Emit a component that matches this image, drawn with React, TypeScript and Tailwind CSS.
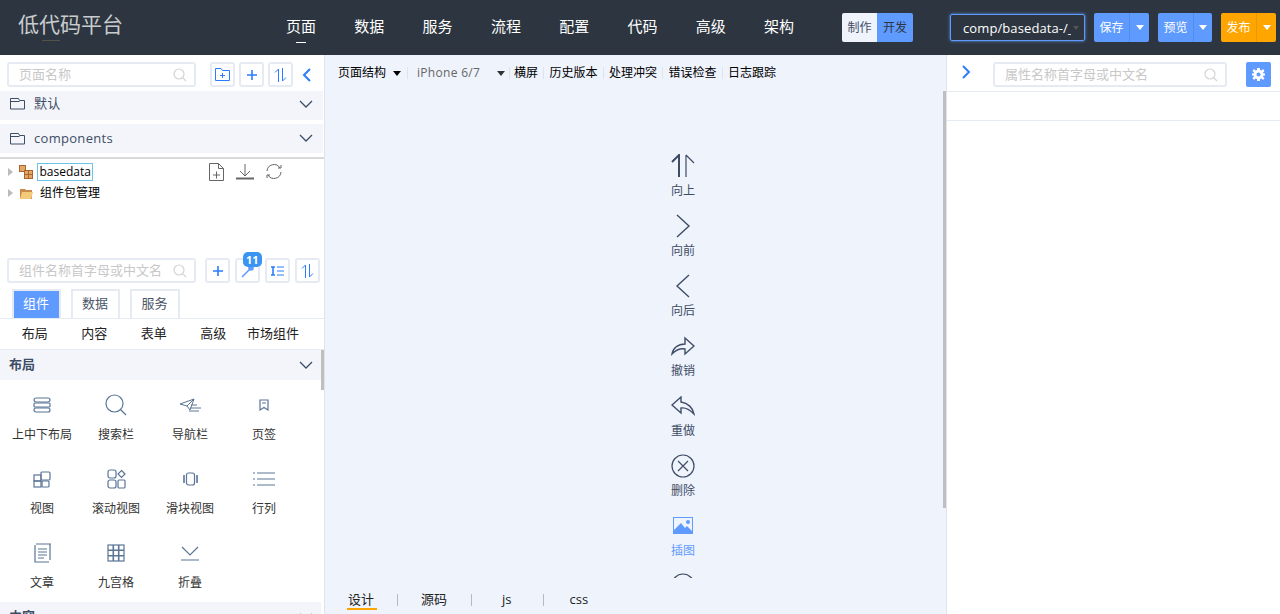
import type { ReactNode } from "react";

const font = "font-['Open_Sans','Noto_Sans_CJK_SC',sans-serif]";

const navItems = ["页面", "数据", "服务", "流程", "配置", "代码", "高级", "架构"];

const SearchIcon = () => (
  <svg width="14" height="14" viewBox="0 0 14 14" fill="none" stroke="#d4d4d4" strokeWidth="1.2">
    <circle cx="6" cy="6" r="5" />
    <path d="M9.6 9.6 13 13" />
  </svg>
);

const Chevron = ({ color = "#3e4d66" }: { color?: string }) => (
  <svg width="14" height="9" viewBox="0 0 14 9" fill="none" stroke={color} strokeWidth="1.3">
    <path d="M1 1l6 6 6-6" />
  </svg>
);

const FolderIcon = () => (
  <svg width="15" height="12" viewBox="0 0 15 12" fill="none" stroke="#3e4d66" strokeWidth="1">
    <path d="M.5 11V.5h8l1 2h5V11zM.5 3.500h9" />
  </svg>
);

const Plus = () => (
  <svg width="10" height="10" viewBox="0 0 10 10" stroke="#2b7cff" strokeWidth="1.6">
    <path d="M0 5h10M5 0v10" />
  </svg>
);

const SortIcon = () => (
  <svg width="13" height="14" viewBox="0 0 13 14" fill="none" stroke="#2b7cff" strokeWidth="1">
    <path d="M4.500 14V1L1 4.500M8.500 0v13L12 9.500" />
  </svg>
);

const SmallSearch = ({ className = "" }: { className?: string }) => (
  <span className={className}>
    <SearchIcon />
  </span>
);

const IconBtn = ({ children }: { children: ReactNode }) => (
  <button className="flex h-[25px] w-[25px] items-center justify-center rounded-[3px] border-2 border-[#e6ebf3] bg-white">
    {children}
  </button>
);

const SplitBtn = ({ label, orange, narrow }: { label: string; orange?: boolean; narrow?: boolean }) => (
  <div
    className={`flex h-[29px] items-center rounded-[2px] text-[12px] text-white ${narrow ? "w-[54px]" : "w-[55px]"} ${
      orange ? "bg-[#ffa500]" : "bg-[#5f9bff]"
    }`}
  >
    <span className="flex w-[35px] justify-center">{label}</span>
    <span
      className={`flex h-full flex-1 items-center justify-center border-l ${
        orange ? "border-[#e8980a]" : "border-[#4f8cf0]"
      }`}
    >
      <span className="h-0 w-0 border-x-[4px] border-t-[5px] border-x-transparent border-t-white" />
    </span>
  </div>
);

const s = { fill: "none", stroke: "#5b7596", strokeWidth: 1.2 };

const widgets: { name: string; icon: ReactNode }[] = [
  {
    name: "上中下布局",
    icon: (
      <svg width="18" height="16" viewBox="0 0 18 16" {...s}>
        <rect x="1" y="1" width="16" height="4" rx="2" />
        <rect x="1" y="6" width="16" height="4" rx="1" />
        <rect x="1" y="11" width="16" height="4" rx="2" />
      </svg>
    ),
  },
  {
    name: "搜索栏",
    icon: (
      <svg width="22" height="22" viewBox="0 0 22 22" {...s}>
        <circle cx="9.500" cy="9.500" r="8.500" />
        <path d="M15.500 15.500 21 21" />
      </svg>
    ),
  },
  {
    name: "导航栏",
    icon: (
      <svg width="23" height="14" viewBox="0 0 23 14" {...s} strokeWidth={1}>
        <path d="M1 6 15 1 11 12 8 8zM8 8l7-7M12 7h6M11 10h11M10 13h10" />
      </svg>
    ),
  },
  {
    name: "页签",
    icon: (
      <svg width="10" height="12" viewBox="0 0 10 12" {...s}>
        <path d="M1 1h8v10L5 8.500 1 11zM3 4h4" />
      </svg>
    ),
  },
  {
    name: "视图",
    icon: (
      <svg width="18" height="17" viewBox="0 0 18 17" {...s}>
        <rect x="1" y="4" width="7" height="6" />
        <rect x="8" y="1" width="9" height="8" rx="1" />
        <rect x="1" y="10" width="7" height="6" />
        <rect x="9" y="10" width="7" height="6" rx="1" />
      </svg>
    ),
  },
  {
    name: "滚动视图",
    icon: (
      <svg width="19" height="20" viewBox="0 0 19 20" {...s}>
        <rect x="1" y="1" width="8" height="8" rx="2" />
        <path d="M14.500 1.500 18 5l-3.500 3.500L11 5z" />
        <rect x="1" y="11" width="8" height="8" rx="2" />
        <rect x="11" y="11" width="7" height="8" rx="1" />
      </svg>
    ),
  },
  {
    name: "滑块视图",
    icon: (
      <svg width="15" height="14" viewBox="0 0 15 14" {...s}>
        <rect x="3.500" y="1" width="8" height="12" rx="2" />
        <path d="M1 3v8M14 3v8" strokeWidth={1.6} />
      </svg>
    ),
  },
  {
    name: "行列",
    icon: (
      <svg width="22" height="14" viewBox="0 0 22 14" {...s} strokeWidth={1}>
        <path d="M0 1h2M4 1h18M0 7h2M4 7h18M0 13h2M4 13h18" />
      </svg>
    ),
  },
  {
    name: "文章",
    icon: (
      <svg width="17" height="20" viewBox="0 0 17 20" {...s}>
        <path d="M2 1h15M16 1v16M1 2v17h14M4 6h9M4 9h9M4 12h9M4 15h6" />
      </svg>
    ),
  },
  {
    name: "九宫格",
    icon: (
      <svg width="18" height="18" viewBox="0 0 18 18" {...s}>
        <rect x="1" y="1" width="16" height="16" />
        <path d="M6.300 1v16M11.700 1v16M1 6.300h16M1 11.700h16" strokeWidth={1.6} />
      </svg>
    ),
  },
  {
    name: "折叠",
    icon: (
      <svg width="18" height="15" viewBox="0 0 18 15" {...s}>
        <path d="M1 1l8 8 8-8M0 14h18" />
      </svg>
    ),
  },
];

const d = { fill: "none", stroke: "#3e4d66", strokeWidth: 1.2 };

const actions: { name: string; icon: ReactNode; active?: boolean }[] = [
  {
    name: "向上",
    icon: (
      <svg width="24" height="24" viewBox="0 0 24 24" {...d}>
        <path d="M1 8l7-7v22" strokeWidth={2} />
        <path d="M15 1v22M15 1l8 8" />
      </svg>
    ),
  },
  {
    name: "向前",
    icon: (
      <svg width="24" height="24" viewBox="0 0 24 24" {...d} strokeWidth={1.4}>
        <path d="M6 1l12 11L6 23" />
      </svg>
    ),
  },
  {
    name: "向后",
    icon: (
      <svg width="24" height="24" viewBox="0 0 24 24" {...d} strokeWidth={1.4}>
        <path d="M18 1 6 12l12 11" />
      </svg>
    ),
  },
  {
    name: "撤销",
    icon: (
      <svg width="24" height="20" viewBox="0 0 24 20" {...d} strokeWidth={1.4}>
        <path d="M14 2l9 8-9 8v-5c-5-1-9 1-13 5 1-6 6-10 13-10z" />
      </svg>
    ),
  },
  {
    name: "重做",
    icon: (
      <svg width="24" height="20" viewBox="0 0 24 20" {...d} strokeWidth={1.4}>
        <path d="M10 1 1 9l9 8v-5c5-1 9 2 13 6-1-6-6-11-13-12z" />
      </svg>
    ),
  },
  {
    name: "删除",
    icon: (
      <svg width="24" height="24" viewBox="0 0 24 24" {...d}>
        <circle cx="12" cy="12" r="11" />
        <path d="M7 7l10 10M17 7 7 17" />
      </svg>
    ),
  },
  {
    name: "插图",
    active: true,
    icon: (
      <svg width="20" height="17" viewBox="0 0 20 17">
        <path d="M0 0h20v17H0z" fill="#5f9bff" />
        <path d="M1 1h18v13l-5-5-2 2-4-5-7 7z" fill="#eff3fc" />
        <circle cx="15" cy="5" r="2" fill="#5f9bff" />
      </svg>
    ),
  },
];

const tools = ["横屏", "历史版本", "处理冲突", "错误检查", "日志跟踪"];

const Header = () => (
  <header className="flex h-[55px] shrink-0 items-center bg-[#2d3640] text-white">
    <h1 className="relative ml-[18px] -mt-[6px] w-[268px] text-[21px] leading-none font-normal text-[#c9cccf]">
      低代码平台
      <span className="absolute top-[26px] left-[24px] h-px w-[18px] bg-[#55524c]" />
    </h1>
    <nav className="-mt-[2px] flex w-[556px]">
      {navItems.map((item, i) => (
        <a key={item} className="relative w-[68.300px] text-[15px]">
          {item}
          {i === 0 && (
            <span className="absolute top-[27px] left-[10px] h-px w-[10px] bg-white" />
          )}
        </a>
      ))}
    </nav>
    <div className="flex h-[29px] w-[71px] overflow-hidden rounded-[2px] text-[12px]">
      <span className="flex w-[35px] items-center justify-center bg-[#eff3fc] text-[#3e4d66]">制作</span>
      <span className="flex flex-1 items-center justify-center bg-[#5f9bff] text-[#2d3640]">开发</span>
    </div>
    <div className="ml-[37px] flex h-[27px] w-[135px] items-center rounded-[2px] border border-[#5f9bff] pl-[12px] text-[13px] text-white shadow-[0_0_3px_#5f9bff]">
      <span className="w-[108px] overflow-hidden pt-[2px] tracking-[0.1px] whitespace-nowrap">comp/basedata-/_</span>
      <span className="ml-[2px] h-0 w-0 border-x-[3px] border-t-[4px] border-x-transparent border-t-[#555]" />
    </div>
    <div className="ml-[9px] flex gap-[9px]">
      <SplitBtn label="保存" />
      <SplitBtn label="预览" narrow />
      <SplitBtn label="发布" orange />
    </div>
  </header>
);

const FolderRow = ({ label, raised }: { label: string; raised?: boolean }) => (
  <div
    className={`flex h-[29px] items-center bg-[#f3f5fa] px-[10px] text-[13px] text-[#3e4d66] ${
      raised ? "pb-[3px]" : ""
    }`}
  >
    <FolderIcon />
    <span className="ml-[9px] flex-1 tracking-[0.3px]">{label}</span>
    <Chevron />
  </div>
);

const LeftPanel = () => (
  <aside className="flex w-[325px] shrink-0 flex-col overflow-hidden border-r border-[#dfe4ec] bg-white">
    <div className="mt-[7px] flex h-[25px] items-center pl-[7px]">
      <div className="flex h-[25px] w-[189px] items-center justify-between rounded-[3px] border-2 border-[#e6ebf3] pr-[7px] pl-[10px] text-[13px] text-[#c8c8c8]">
        页面名称
        <SmallSearch />
      </div>
      <div className="ml-[14px] flex gap-[4px]">
        <IconBtn>
          <svg width="15" height="13" viewBox="0 0 15 13" fill="none" stroke="#2b7cff" strokeWidth="1">
            <path d="M.5 12.500V.5H6l1.500 2h7v10zM5 7.500h5M7.500 5v5" />
          </svg>
        </IconBtn>
        <IconBtn>
          <Plus />
        </IconBtn>
        <IconBtn>
          <SortIcon />
        </IconBtn>
      </div>
      <svg className="ml-[9px]" width="9" height="14" viewBox="0 0 9 14" fill="none" stroke="#2b7cff" strokeWidth="2">
        <path d="M8 1 2 7l6 6" />
      </svg>
    </div>
    <div className="mt-[4px] mr-[1px]">
      <FolderRow label="默认" raised />
    </div>
    <div className="mt-[4px] mr-[1px]">
      <FolderRow label="components" />
    </div>
    <div className="mt-[4px] h-[2px] bg-[#d9d9d9]" />

    <div className="relative h-[99px] text-[12px] text-black">
      <div className="flex h-[22px] items-center pt-[3px] pl-[8px]">
        <span className="h-0 w-0 border-y-[4px] border-l-[5px] border-y-transparent border-l-[#bbb]" />
        <svg className="ml-[6px]" width="15" height="14" viewBox="0 0 15 14">
          <rect x="0.500" y="0.500" width="6" height="6" fill="#e3a868" stroke="#a8662c" />
          <rect x="5.500" y="5.500" width="8" height="8" fill="#e3a868" stroke="#a8662c" />
          <path d="M9.500 5.500v8M5.500 9.500h8" stroke="#a8662c" />
        </svg>
        <span className="ml-[3px] flex h-[18px] items-center border border-[#6cc3ea] px-[1.500px]">basedata</span>
        <span className="ml-[116px] flex items-center gap-[12px]">
          <svg width="15" height="18" viewBox="0 0 15 18" fill="none" stroke="#666">
            <path d="M.5.500h9l5 5v12H.5zM9.500.5v5h5M4 12h7M7.500 8.500v7" />
          </svg>
          <svg width="18" height="17" viewBox="0 0 18 17" fill="none" stroke="#666">
            <path d="M9 1v11M4 8l5 5 5-5" />
            <path d="M0 15.500h18" strokeWidth="2" />
          </svg>
          <svg className="-ml-[1px]" width="18" height="17" viewBox="0 0 18 17" fill="none" stroke="#666">
            <path d="M2 8a7 7 0 0 1 13-3M16 9a7 7 0 0 1-13 3M13 5h3V2M5 12H2v3" />
          </svg>
        </span>
      </div>
      <div className="flex h-[23px] items-center pt-[1px] pl-[8px]">
        <span className="h-0 w-0 border-y-[4px] border-l-[5px] border-y-transparent border-l-[#bbb]" />
        <svg className="ml-[6px]" width="15" height="13" viewBox="0 0 15 13">
          <path d="M1 2h5l1 1h6v9H1z" fill="#c98a4b" />
          <path d="M3 5h11l-2 7H1z" fill="#f3c97a" />
        </svg>
        <span className="ml-[6px]">组件包管理</span>
      </div>
    </div>

    <div className="flex h-[25px] items-center pl-[7px]">
      <div className="flex h-[25px] w-[189px] items-center justify-between rounded-[3px] border-2 border-[#e6ebf3] pr-[7px] pl-[10px] text-[13px] whitespace-nowrap text-[#c8c8c8]">
        组件名称首字母或中文名
        <SmallSearch />
      </div>
      <div className="ml-[9px] flex gap-[5px]">
        <IconBtn>
          <Plus />
        </IconBtn>
        <div className="relative">
          <IconBtn>
            <svg width="14" height="14" viewBox="0 0 14 14" stroke="#5f9bff" strokeWidth="1.600" fill="#5f9bff">
              <path d="M1 13 9 5" />
              <circle cx="10" cy="4" r="2" />
            </svg>
          </IconBtn>
          <span className="absolute -top-[6px] left-[8px] rounded-[5px] bg-[#3a94f2] px-[3px] text-[11px] leading-[15px] font-bold text-white">
            11
          </span>
        </div>
        <IconBtn>
          <svg width="13" height="10" viewBox="0 0 13 10" fill="none" stroke="#2b7cff" strokeWidth="1">
            <path d="M6 1h7M6 5h7M6 9h7" />
            <path d="M2 1v8" strokeWidth="1.600" />
            <path d="M0 1h4M0 9h4" strokeWidth="1.600" />
          </svg>
        </IconBtn>
        <IconBtn>
          <SortIcon />
        </IconBtn>
      </div>
    </div>

    <div className="mt-[7px] flex h-[29px] items-end gap-[10px] border-b border-[#e6ebf3] pl-[12px] text-[13px] text-[#4a5568]">
      <span className="flex h-[29px] w-[49px] items-center justify-center border-2 border-b-0 border-[#e6ebf3] bg-[#5f9bff] pr-[1px] pb-[1px] text-white">组件</span>
      <span className="flex h-[29px] w-[49px] items-center justify-center border-2 border-b-0 border-[#e6ebf3] pr-[1px] pb-[1px]">数据</span>
      <span className="flex h-[29px] w-[50px] items-center justify-center border-2 border-b-0 border-[#e6ebf3] pr-[1px] pb-[1px]">服务</span>
    </div>

    <div className="flex h-[31px] items-center border-b border-[#e6ebf3] pl-[5px] text-[13px] text-[#222]">
      <span className="w-[59.500px] text-center">布局</span>
      <span className="w-[59.500px] text-center">内容</span>
      <span className="w-[59.500px] text-center">表单</span>
      <span className="w-[59.500px] text-center">高级</span>
      <span className="w-[60px] text-center">市场组件</span>
    </div>

    <div className="relative min-h-0 flex-1 overflow-hidden pr-[3px]">
      <span className="absolute top-0 right-0 h-[40px] w-[3px] bg-[#bfbfbf]" />
      <div className="flex h-[30px] items-center justify-between bg-[#f3f5fa] pr-[8px] pl-[9px] text-[13px] font-bold text-[#3e4d66]">
        布局
        <Chevron />
      </div>
      <div className="grid grid-cols-[repeat(4,74px)] pl-[5px]">
        {widgets.map((w) => (
          <div key={w.name} className="flex h-[74px] flex-col items-center">
            <div className="flex h-[47px] items-center justify-center pt-[3px]">{w.icon}</div>
            <span className="text-[12px] leading-[16px] text-[#333]">{w.name}</span>
          </div>
        ))}
      </div>
      <div className="flex h-[30px] items-center justify-between bg-[#f3f5fa] pr-[8px] pl-[9px] text-[13px] font-bold text-[#3e4d66]">
        内容
        <Chevron />
      </div>
    </div>
  </aside>
);

const Center = () => (
  <main className="flex min-w-0 flex-1 flex-col bg-[#eff3fc]">
    <div className="flex h-[36px] shrink-0 items-center pl-[13px] text-[12px] text-black">
      <span>页面结构</span>
      <span className="ml-[7px] h-0 w-0 border-x-[4px] border-t-[5px] border-x-transparent border-t-black" />
      <span className="ml-[6px] h-[12px] w-px bg-[#dfe4ec]" />
      <span className="ml-[9px] w-[80px] tracking-[0.3px] text-[#666]">iPhone 6/7</span>
      <span className="h-0 w-0 border-x-[4px] border-t-[5px] border-x-transparent border-t-[#333]" />
      <span className="ml-[4px] h-[12px] w-px bg-[#dfe4ec]" />
      {tools.map((t, i) => (
        <span key={t} className="flex items-center">
          {i > 0 && <span className="mx-[5.250px] h-[12px] w-px bg-[#dfe4ec]" />}
          <span className={i === 0 ? "ml-[4px]" : ""}>{t}</span>
        </span>
      ))}
    </div>
    <div className="relative min-h-0 flex-1 overflow-hidden">
      <span className="absolute top-0 right-0 h-[417px] w-[3px] bg-[#bfbfbf]" />
      <div className="flex h-[487px] flex-col items-center overflow-hidden pt-[62px] pl-[95px]">
        {actions.map((a) => (
          <div
            key={a.name}
            className={`flex h-[60px] shrink-0 flex-col items-center text-[12px] ${
              a.active ? "text-[#5f9bff]" : "text-[#3e4d66]"
            }`}
          >
            <div className="flex h-[25px] items-center">{a.icon}</div>
            <span className="mt-[5px] leading-[16px]">{a.name}</span>
          </div>
        ))}
        {/* next action is scrolled mostly out of view, only the top of its ring shows */}
        <svg className="shrink-0" width="24" height="24" viewBox="0 0 24 24" {...d}>
          <circle cx="12" cy="12" r="11" />
        </svg>
      </div>
      <div className="flex h-[36px] items-center pt-[8px] pl-[23px] text-[13px] text-[#222]">
        <span className="relative">
          设计
          <span className="absolute bottom-0 -left-[1px] h-[2px] w-[30px] bg-[#ffa500]" />
        </span>
        <span className="ml-[23px] h-[12px] w-px bg-[#bbb]" />
        <span className="ml-[23px]">源码</span>
        <span className="ml-[24px] h-[12px] w-px bg-[#bbb]" />
        <span className="ml-[30px]">js</span>
        <span className="ml-[31px] h-[12px] w-px bg-[#bbb]" />
        <span className="ml-[26px]">css</span>
      </div>
    </div>
  </main>
);

const RightPanel = () => (
  <aside className="w-[334px] shrink-0 border-l border-[#dfe4ec] bg-white">
    <div className="flex h-[37px] items-start border-b border-[#e6ebf3] pt-[7px]">
      <svg className="mt-[3px] ml-[15px]" width="9" height="14" viewBox="0 0 9 14" fill="none" stroke="#2b7cff" strokeWidth="2">
        <path d="M1 1l6 6-6 6" />
      </svg>
      <div className="ml-[22px] flex h-[25px] w-[234px] items-center justify-between rounded-[3px] border-2 border-[#e6ebf3] pr-[7px] pl-[10px] text-[13px] text-[#c8c8c8]">
        属性名称首字母或中文名
        <SmallSearch />
      </div>
      <button className="ml-[19px] flex h-[25px] w-[25px] items-center justify-center rounded-[2px] bg-[#5f9bff]">
        <svg width="13" height="13" viewBox="0 0 13 13" fill="white">
          <path d="M5 0h3v2l1.500.6L11 1l1.500 2-1.500 1.500.5 1H13v2h-1.500l-.5 1.500L12.500 10 11 12l-1.500-1.500L8 11v2H5v-2l-1.500-.5L2 12 .5 10 2 8.500 1.500 7.500H0v-2h1.500l.5-1L.5 3 2 1l1.500 1.600L5 2z" />
          <circle cx="6.500" cy="6.500" r="2" fill="#5f9bff" />
        </svg>
      </button>
    </div>
    <div className="h-[29px] border-b border-[#e6ebf3]" />
  </aside>
);

export default function App() {
  return (
    <div className={`flex h-[614px] w-[1280px] flex-col overflow-hidden bg-white ${font}`}>
      <Header />
      <div className="flex min-h-0 flex-1">
        <LeftPanel />
        <Center />
        <RightPanel />
      </div>
    </div>
  );
}
